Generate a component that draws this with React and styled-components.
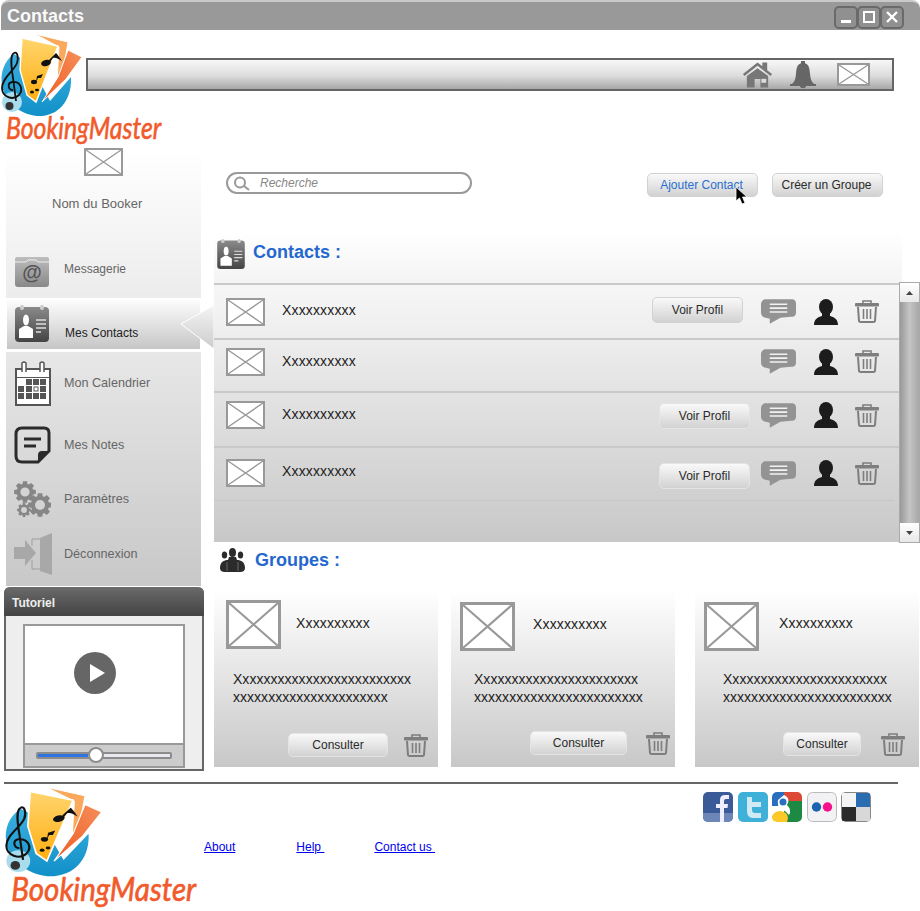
import React from "react";
import styled, { createGlobalStyle } from "styled-components";

const Global = createGlobalStyle`
  html, body { margin: 0; padding: 0; background: #fff; }
  body { font-family: "Liberation Sans", Arial, sans-serif; }
  * { box-sizing: border-box; }
`;

const Page = styled.div`
  position: relative;
  width: 920px;
  height: 911px;
  overflow: hidden;
  background: #fff;
`;
const TitleBar = styled.header`
  height: 30px;
  width: 919px;
  margin-left: 1px;
  border-radius: 8px 8px 0 0;
  background: #999;
  border-top: 2px solid #c9c9c9;
  display: flex;
  align-items: center;
  padding: 0 16px 0 6px;
`;
const WindowTitle = styled.h1`
  margin: 0;
  font-size: 18px;
  font-weight: bold;
  color: #fafafa;
  flex: 1;
`;
const WinButtons = styled.div`
  display: flex;
  margin-top: 2px;
`;
const WinButton = styled.div`
  width: 24px;
  height: 23px;
  margin-left: -1px;
  border: 2px solid #6a6a6a;
  border-radius: 5px;
  background: #909090;
  display: flex;
  align-items: center;
  justify-content: center;
`;
const TopRow = styled.div`
  height: 118px;
  display: flex;
  align-items: flex-start;
  padding-top: 3px;
`;
const LogoSvg = styled.svg`
  flex: none;
  display: block;
  width: ${p => p.$w}px;
  height: ${p => p.$h}px;
`;
const LogoSlot = styled.div`
  flex: none;
  width: 86px;
  overflow: visible;
`;
const NavBar = styled.nav`
  width: 808px;
  height: 33px;
  margin-top: 25px;
  border: 2px solid #666;
  background: linear-gradient(#f8f8f8, #dcdcdc 55%, #a8a8a8);
  display: flex;
  align-items: center;
  justify-content: flex-end;
  padding-right: 22px;
`;
const NavIcon = styled.svg`
  display: block;
  flex: none;
  margin-left: ${p => p.$ml || 0}px;
`;
const Body = styled.div`
  display: flex;
  padding-left: 4px;
`;
const Sidebar = styled.aside`
  width: 200px;
  flex: none;
  display: flex;
  flex-direction: column;
`;
const TopPanel = styled.section`
  width: 195px;
  height: 150px;
  margin-left: 2px;
  background: linear-gradient(#fff, #ececec);
  display: flex;
  flex-direction: column;
`;
const BookerName = styled.div`
  margin: 20px 0 0 46px;
  font-size: 13px;
  line-height: 16px;
  color: #666;
`;
const Ph = styled.svg`
  display: block;
  flex: none;
  background: #fff;
`;
const AvatarSlot = styled.div`
  margin-left: 78px;
`;
const MenuRow = styled.div`
  height: ${p => p.$h}px;
  margin-top: ${p => p.$mt || 0}px;
  display: flex;
  align-items: center;
`;
const IconSlot = styled.div`
  width: 58px;
  flex: none;
  padding-left: ${p => p.$pl ?? 9}px;
  display: flex;
`;
const MenuLabel = styled.span`
  font-size: ${p => p.$size || 12.6}px;
  color: ${p => p.$dark ? "#222" : "#666"};
  margin-top: ${p => p.$mt || 0}px;
`;
const ActiveItem = styled.div`
  width: 193px;
  height: 51px;
  margin-left: 3px;
  background: linear-gradient(#fff, #c6c6c6);
  display: flex;
  align-items: center;
`;
const ActiveArrow = styled.svg`
  position: absolute;
  left: 180px;
  top: 304px;
`;
const MenuPanel = styled.section`
  width: 195px;
  height: 234px;
  margin: 3px 0 1px 2px;
  background: linear-gradient(#e7e7e7, #c8c8c8);
`;
const Tutorial = styled.section`
  width: 200px;
  height: 184px;
  border: 2px solid #666;
  border-top: none;
  border-radius: 6px 6px 0 0;
  background: #eee;
`;
const TutorialHead = styled.div`
  height: 29px;
  margin: 0 -2px;
  padding: 2px 0 0 8px;
  border-radius: 6px 6px 0 0;
  background: linear-gradient(#6a6a6a, #444);
  color: #eee;
  font-size: 12px;
  font-weight: bold;
  line-height: 29px;
`;
const Video = styled.div`
  width: 162px;
  height: 144px;
  margin: 8px 0 0 17px;
  border: 2px solid #999;
  background: #fff;
  display: flex;
  flex-direction: column;
`;
const Screen = styled.div`
  flex: 1;
  display: flex;
  justify-content: center;
  padding: 26px 18px 0 0;
`;
const Controls = styled.div`
  height: 23px;
  border-top: 2px solid #999;
  background: #ccc;
  display: flex;
  align-items: center;
  padding: 0 11px;
`;
const Track = styled.div`
  position: relative;
  width: 136px;
  height: 7px;
  border: 2px solid #8c8c8c;
  border-radius: 2px;
  background: #e8e8ee;
`;
const TrackFill = styled.div`
  height: 100%;
  background: #2f73e0;
`;
const Knob = styled.div`
  position: absolute;
  left: 50px;
  top: -7px;
  width: 16px;
  height: 16px;
  border-radius: 50%;
  border: 2px solid #8c8c8c;
  background: #fff;
`;
const Main = styled.main`
  width: 706px;
  flex: none;
  margin-left: 10px;
`;
const SearchRow = styled.div`
  height: 84px;
  display: flex;
  align-items: flex-start;
  padding: 24px 0 0 12px;
`;
const SearchBox = styled.div`
  width: 246px;
  height: 22px;
  border: 2px solid #999;
  border-radius: 11px;
  background: #fff;
  display: flex;
  align-items: center;
  padding-left: 5px;
`;
const SearchText = styled.span`
  margin-left: 10px;
  font-size: 12px;
  font-style: italic;
  color: #888;
`;
const Btn = styled.button`
  flex: none;
  width: ${p => p.$w}px;
  height: ${p => p.$h || 24}px;
  margin: ${p => p.$m || 0};
  padding: 0 ${p => p.$tp || 0}px 0 0;
  border: 1px solid ${p => p.$flat ? "#e4e4e4" : "#d2d2d2"};
  border-radius: 5px;
  background: linear-gradient(#f9f9f9, #d2d2d2);
  font: 12px "Liberation Sans", Arial, sans-serif;
  color: ${p => p.$blue ? "#2a6fd0" : "#2a2a2a"};
`;
const Cursor = styled.svg`
  position: absolute;
  left: 735px;
  top: 186px;
`;
const SectionHead = styled.div`
  width: 688px;
  height: 51px;
  background: linear-gradient(#fff, #f4f4f4);
  display: flex;
  align-items: flex-start;
  padding: 7px 0 0 3px;
`;
const SectionTitle = styled.h2`
  margin: ${p => p.$mt || 0}px 0 0 ${p => p.$ml}px;
  font-size: 18px;
  font-weight: bold;
  color: #2468cf;
`;
const ListWrap = styled.div`
  display: flex;
  height: 260px;
`;
const ListBody = styled.div`
  width: 685px;
  height: 259px;
  background: linear-gradient(#f7f7f7, #c8c8c8);
`;
const Row = styled.div`
  height: ${p => p.$h}px;
  border-top: 2px solid #c9c9c9;
  padding: 0 20px ${p => p.$pb || 0}px 12px;
  display: flex;
  align-items: center;
`;
const RowEnd = styled.div`
  width: 680px;
  border-top: 1px solid #c6c6c6;
`;
const Name = styled.span`
  font-size: 14px;
  letter-spacing: .15px;
  color: #222;
  margin: 0 auto ${p => p.$mb ?? 3}px ${p => p.$ml}px;
`;
const Scrollbar = styled.div`
  width: 21px;
  height: 261px;
  margin-top: -1px;
  border: 1px solid #aaa;
  background: linear-gradient(90deg, #999, #c4c4c4 50%, #a8a8a8);
  display: flex;
  flex-direction: column;
  justify-content: space-between;
`;
const ScrollBtn = styled.div`
  height: 19px;
  background: linear-gradient(#fff, #e8e8e8);
  display: flex;
  align-items: center;
  justify-content: center;
`;
const GroupHead = styled.div`
  height: 47px;
  display: flex;
  align-items: center;
  padding: 0 0 13px 6px;
`;
const Cards = styled.div`
  display: flex;
`;
const Card = styled.article`
  flex: none;
  width: 224px;
  height: 177px;
  margin-left: ${p => p.$ml}px;
  background: linear-gradient(#fff, #c8c8c8);
  display: flex;
  flex-direction: column;
  padding: ${p => p.$top}px 0 0 ${p => p.$left}px;
`;
const CardHead = styled.div`
  display: flex;
  align-items: center;
  height: 49px;
`;
const CardText = styled.p`
  margin: ${p => p.$mt}px 0 0 ${p => p.$tl}px;
  font-size: 14px;
  line-height: 18px;
  letter-spacing: .03px;
  color: #222;
  white-space: pre-line;
`;
const CardFoot = styled.div`
  margin-top: auto;
  padding: 0 ${p => p.$pr}px ${p => p.$pb}px 0;
  display: flex;
  align-items: center;
  justify-content: flex-end;
`;
const FooterRule = styled.hr`
  width: 894px;
  height: 2px;
  margin: 11px 0 0 4px;
  border: none;
  background: #666;
`;
const Footer = styled.footer`
  display: flex;
  align-items: flex-start;
  padding: 2px 0 0 4px;
`;
const FootLinks = styled.div`
  display: flex;
  padding-top: 53px;
  margin-left: 7px;
`;
const FootLink = styled.a`
  font-size: 12px;
  line-height: 16px;
  color: #00e;
  text-decoration: underline;
  white-space: pre;
  margin-left: ${p => p.$ml || 0}px;
`;
const Socials = styled.div`
  display: flex;
  gap: 4.5px;
  margin: 6px 0 0 268px;
`;
const Social = styled.svg`
  display: block;
  border-radius: 5px;
`;

const Logo = ({ w, h, id }) => (
  <LogoSvg $w={w} $h={h} viewBox="0 0 162 114" preserveAspectRatio="none">
    <defs>
      <linearGradient id={id + "y"} x1="0" y1="0" x2="0" y2="1">
        <stop offset="0" stopColor="#ffd56e" /><stop offset="1" stopColor="#ffae10" />
      </linearGradient>
      <linearGradient id={id + "b"} x1="0" y1="0" x2="0" y2="1">
        <stop offset="0" stopColor="#3db0e0" /><stop offset="1" stopColor="#1190c8" />
      </linearGradient>
      <linearGradient id={id + "r"} x1="1" y1="0" x2="0" y2="1">
        <stop offset="0" stopColor="#f58f5a" /><stop offset="1" stopColor="#f05a22" />
      </linearGradient>
    </defs>
    <path d="M14 21 C4 28 0 40 2 52 C5 72 25 84 42 83 C62 81 72 64 71 44 L50 68 L30 30 Z" fill={`url(#${id}b)`} />
    <circle cx="12" cy="69" r="10" fill="#a9dcec" />
    <circle cx="9.500" cy="73" r="4" fill="#333" />
    <path d="M35 1 L68 9 L65 27 L57 50 L59 14 Z" fill="#f9a85c" stroke="#fff" strokeWidth="1" />
    <path d="M68 17 L82 24 L66 46 L42 69 L58 44 Z" fill={`url(#${id}r)`} stroke="#fff" strokeWidth="1" />
    <path d="M22 5 L58 13 L36 69 L27 62 L20 37 Z" fill={`url(#${id}y)`} stroke="#fff" strokeWidth="1.400" />
    <g fill="#111">
      <ellipse cx="46" cy="30" rx="5" ry="3" transform="rotate(-15 46 30)" />
      <path d="M50 29 L53 25 C56 24 58 26 62 28 C59 24 58 22 56 20 L49 27 Z" />
      <ellipse cx="34" cy="49" rx="3" ry="2.200" />
      <path d="M36 49 L37 43 L43 41 L41 45 L38 45 Z" />
      <ellipse cx="32" cy="59" rx="2" ry="1.500" />
      <ellipse cx="37" cy="57" rx="2" ry="1.300" />
    </g>
    <path d="M13 57 C8 57 7 50 12 49 C20 48 24 56 19 62 C13 68 2 64 2 55 C2 45 14 38 17 30 C19 24 17 18 14 20 C10 22 11 32 13 45 L16 68" fill="none" stroke="#111" strokeWidth="1.800" />
    <text transform="translate(6 106) scale(.8 1)" fontFamily="Lato, 'Liberation Sans', sans-serif" fontStyle="italic" fontSize="31" fill="#f15a2a" stroke="#f15a2a" strokeWidth=".6">BookingMaster</text>
  </LogoSvg>
);

const Placeholder = ({ w, h, sw = 2 }) => (
  <Ph width={w} height={h} viewBox={`0 0 ${w} ${h}`}>
    <rect x={sw / 2} y={sw / 2} width={w - sw} height={h - sw} fill="#fff" stroke="#999" strokeWidth={sw} />
    <path d={`M${sw} ${sw} L${w - sw} ${h - sw} M${w - sw} ${sw} L${sw} ${h - sw}`} stroke="#999" strokeWidth={sw * .7} fill="none" />
  </Ph>
);

const Home = () => (
  <NavIcon width="31" height="28" viewBox="0 0 32 28">
    <path d="M1 13 L16 1 L21 5 L21 1 L26 1 L26 9 L31 13 L29.500 15 L16 4.500 L2.500 15 Z" fill="#777" />
    <path d="M5 15 L16 7 L27 15 L27 27 L19 27 L19 18 L13 18 L13 27 L5 27 Z" fill="#777" />
    <rect x="20" y="18" width="5" height="4" fill="#ddd" />
  </NavIcon>
);
const Bell = () => (
  <NavIcon $ml={17} width="26" height="28" viewBox="0 0 26 28">
    <rect x="11" y="0" width="4" height="3" fill="#666" />
    <path d="M13 2 C7 2 6.500 7 6 13 C5.500 18 4.500 21 2 23 L24 23 C21.500 21 20.500 18 20 13 C19.500 7 19 2 13 2 Z" fill="#666" />
    <rect x="0" y="23" width="26" height="2" fill="#666" />
    <path d="M10 25 L16 25 C16 28 10 28 10 25 Z" fill="#666" />
  </NavIcon>
);
const Chat = ({ gap = 0 }) => (
  <NavIcon $ml={gap} width="35" height="25" viewBox="0 0 36 25">
    <path d="M5 0 L31 0 C35 0 36 2 36 5 L36 13 C36 17 34 18 31 18 L20 19 L9 25 L9 20 L5 19 C1 18 0 16 0 13 L0 5 C0 2 2 0 5 0 Z" fill="#939393" />
    <path d="M9 5 H27 M9 9 H27 M9 13 H27" stroke="#f2f2f2" strokeWidth="1.600" />
  </NavIcon>
);
const Person = () => (
  <NavIcon $ml={18} width="24" height="26" viewBox="0 0 24 26">
    <ellipse cx="12" cy="8" rx="7" ry="8" fill="#1c1c1c" />
    <path d="M8 14 L16 14 L16 17 C20 18 24 20 24 26 L0 26 C0 20 4 18 8 17 Z" fill="#1c1c1c" />
  </NavIcon>
);
const Trash = ({ ml = 17 }) => (
  <NavIcon $ml={ml} width="24" height="23" viewBox="0 0 24 23">
    <path d="M8 3 V1 H16 V3" fill="none" stroke="#7e7e7e" strokeWidth="1.600" />
    <rect x="0" y="3" width="24" height="3.400" rx="1" fill="#7e7e7e" />
    <path d="M3 7 L4 21 Q4.200 22 5.500 22 L18.500 22 Q19.800 22 20 21 L21 7" fill="none" stroke="#7e7e7e" strokeWidth="2" />
    <path d="M8.500 9 V19 M12 9 V19 M15.500 9 V19" stroke="#7e7e7e" strokeWidth="1.600" />
  </NavIcon>
);
const MailIcon = () => (
  <NavIcon width="34" height="30" viewBox="0 0 34 30">
    <defs><linearGradient id="mi" x1="0" y1="0" x2="0" y2="1"><stop offset="0" stopColor="#bdbdbd" /><stop offset="1" stopColor="#888" /></linearGradient></defs>
    <path d="M2 0 L32 0 Q34 0 34 2 L34 27 Q34 30 31 30 L3 30 Q0 30 0 27 L0 2 Q0 0 2 0 Z" fill="url(#mi)" />
    <path d="M0 5 H11 L13 3 H21 L23 5 H34" fill="none" stroke="#eee" strokeWidth="1" />
    <text x="17" y="22" textAnchor="middle" fontFamily="'Liberation Sans', sans-serif" fontSize="20" fontWeight="bold" fill="#555">@</text>
  </NavIcon>
);
const ContactCard = ({ id, w = 34, h = 37 }) => (
  <NavIcon width={w} height={h} viewBox="0 0 34 37">
    <defs><linearGradient id={id} x1="0" y1="0" x2="0" y2="1"><stop offset="0" stopColor="#8a8a8a" /><stop offset="1" stopColor="#444" /></linearGradient></defs>
    <rect x="0" y="2" width="34" height="35" rx="4" fill={`url(#${id})`} />
    <rect x="5" y="0" width="4" height="5" rx="2" fill="#ccc" />
    <rect x="25" y="0" width="4" height="5" rx="2" fill="#ccc" />
    <ellipse cx="11" cy="15" rx="3" ry="5.500" fill="#fff" />
    <path d="M9 21 H13 L18 24 V33 H4 V24 Z" fill="#fff" />
    <path d="M21 15 H31 M21 19 H31 M21 23 H31 M21 27 H26" stroke="#ddd" strokeWidth="1.300" />
  </NavIcon>
);
const Calendar = () => (
  <NavIcon width="36" height="45" viewBox="0 0 36 45">
    <rect x="0" y="7" width="36" height="38" fill="#555" />
    <rect x="2" y="9" width="32" height="7" fill="#fff" />
    <path d="M7 11 V2 Q9 0 11 2 V11 M25 11 V2 Q27 0 29 2 V11" fill="#fff" stroke="#555" strokeWidth="1.500" />
    <rect x="2" y="17" width="32" height="26" fill="#fff" />
    <g fill="#555">
      {[[11, 18], [18, 18], [25, 18], [3, 25], [11, 25], [25, 25], [3, 32], [11, 32], [18, 32], [25, 32]].map(([x, y]) => (
        <rect key={x + "-" + y} x={x} y={y} width="6" height="6" />
      ))}
    </g>
    <rect x="19" y="26" width="4" height="4" fill="none" stroke="#555" strokeWidth="1" />
  </NavIcon>
);
const Note = () => (
  <NavIcon width="37" height="38" viewBox="0 0 37 38">
    <path d="M8 2 H30 Q35 2 35 7 V25 L24 36 H8 Q2 36 2 30 V8 Q2 2 8 2 Z" fill="none" stroke="#2b2b2b" strokeWidth="3" />
    <path d="M24 36 V29 Q24 25 28 25 H35 Z" fill="#2b2b2b" />
    <path d="M10 13 H27 M10 20 H22" stroke="#2b2b2b" strokeWidth="3" />
  </NavIcon>
);
const gearPath = (cx, cy, r, teeth) => {
  const pts = [];
  const step = (Math.PI * 2) / teeth;
  for (let i = 0; i < teeth; i++) {
    const a = i * step;
    [[-.32, .76], [-.2, 1], [.2, 1], [.32, .76]].forEach(([o, k]) => {
      const t = a + o * step * 1.2;
      pts.push(`${(cx + Math.cos(t) * r * k).toFixed(2)} ${(cy + Math.sin(t) * r * k).toFixed(2)}`);
    });
  }
  const hole = r * .42;
  return `M${pts.join(" L")} Z M${cx - hole} ${cy} a${hole} ${hole} 0 1 0 ${hole * 2} 0 a${hole} ${hole} 0 1 0 ${-hole * 2} 0 Z`;
};
const Gears = () => (
  <NavIcon width="37" height="37" viewBox="0 0 37 37">
    <path d={gearPath(11, 11, 11, 8)} fill="#868686" fillRule="evenodd" />
    <path d={gearPath(26, 24, 12, 8)} fill="#868686" fillRule="evenodd" />
    <path d={gearPath(10, 29, 7, 8)} fill="#868686" fillRule="evenodd" />
  </NavIcon>
);
const Logout = () => (
  <NavIcon width="38" height="42" viewBox="0 0 38 42">
    <path d="M0 14 H11 V7 L22 20 L11 33 V26 H0 Z" fill="#a8a8a8" />
    <path d="M26 5 L38 0 V42 L26 38 Z" fill="#a8a8a8" />
    <path d="M26 6 H18 V13 M18 27 V36 H26" fill="none" stroke="#999" strokeWidth=".9" />
  </NavIcon>
);
const Groups = () => (
  <NavIcon width="25" height="24" viewBox="0 0 25 24">
    <g fill="#2b2b2b">
      <ellipse cx="12.500" cy="4.500" rx="3.500" ry="4.500" />
      <ellipse cx="4.500" cy="7" rx="2.700" ry="3.500" />
      <ellipse cx="20.500" cy="7" rx="2.700" ry="3.500" />
      <path d="M9 9 H16 L17 12 C21 12 25 14 25 20 Q25 24 20 24 H5 Q0 24 0 20 C0 14 4 12 8 12 Z" />
    </g>
    <path d="M7 14 V23 M18 14 V23" stroke="#777" strokeWidth=".8" />
  </NavIcon>
);

const contacts = [
  { h: 55, btn: { w: 91, m: "-4px 0 0" }, gap: 18 },
  { h: 53, pb: 8, gap: 0, mb: 1 },
  { h: 55, pb: 9, btn: { w: 91, m: "1px 0 0" }, gap: 11 },
  { h: 54, pb: 2, btn: { w: 91, m: "5px 0 0" }, gap: 11, mb: 5 },
];

const groups = [
  { ml: 0, top: 10, left: 12, nameMl: 15, nameMb: 4, mt: 21, tl: 7, pr: 10, pb: 10, btn: 100, gap: 16, lines: "Xxxxxxxxxxxxxxxxxxxxxxxxx\nxxxxxxxxxxxxxxxxxxxxxx" },
  { ml: 13, top: 12, left: 9, nameMl: 18, nameMb: 6, mt: 19, tl: 14, pr: 5, pb: 12, btn: 97, gap: 19, lines: "Xxxxxxxxxxxxxxxxxxxxxxx\nxxxxxxxxxxxxxxxxxxxxxxxx" },
  { ml: 20, top: 12, left: 9, nameMl: 20, nameMb: 8, mt: 19, tl: 19, pr: 14, pb: 11, btn: 78, gap: 20, lines: "Xxxxxxxxxxxxxxxxxxxxxxx\nxxxxxxxxxxxxxxxxxxxxxxxx" },
];

export default function App() {
  return (
    <Page>
      <Global />
      <TitleBar>
        <WindowTitle>Contacts</WindowTitle>
        <WinButtons>
          <WinButton>
            <svg width="14" height="14" viewBox="0 0 14 14"><rect x="2" y="10" width="10" height="3" fill="#fff" /></svg>
          </WinButton>
          <WinButton>
            <svg width="14" height="14" viewBox="0 0 14 14"><rect x="2" y="2" width="10" height="10" fill="none" stroke="#fff" strokeWidth="2" /></svg>
          </WinButton>
          <WinButton>
            <svg width="14" height="14" viewBox="0 0 14 14"><path d="M2 2 L12 12 M12 2 L2 12" stroke="#fff" strokeWidth="2.400" /></svg>
          </WinButton>
        </WinButtons>
      </TitleBar>
      <TopRow>
        <LogoSlot><Logo w={162} h={114} id="a" /></LogoSlot>
        <NavBar>
          <Home />
          <Bell />
          <NavIcon as="div" $ml={21}><Placeholder w={33} h={23} /></NavIcon>
        </NavBar>
      </TopRow>
      <Body>
        <Sidebar>
          <TopPanel>
            <AvatarSlot><Placeholder w={39} h={28} /></AvatarSlot>
            <BookerName>Nom du Booker</BookerName>
            <MenuRow $h={40} $mt={40}>
              <IconSlot><MailIcon /></IconSlot>
              <MenuLabel $size={12} $mt={-6}>Messagerie</MenuLabel>
            </MenuRow>
          </TopPanel>
          <ActiveItem>
            <IconSlot $pl={8}><ContactCard id="c1" /></IconSlot>
            <MenuLabel $size={12} $dark $mt={19}>Mes Contacts</MenuLabel>
          </ActiveItem>
          <MenuPanel>
            <MenuRow $h={62}><IconSlot><Calendar /></IconSlot><MenuLabel>Mon Calendrier</MenuLabel></MenuRow>
            <MenuRow $h={62}><IconSlot $pl={8}><Note /></IconSlot><MenuLabel>Mes Notes</MenuLabel></MenuRow>
            <MenuRow $h={46}><IconSlot $pl={8}><Gears /></IconSlot><MenuLabel>Paramètres</MenuLabel></MenuRow>
            <MenuRow $h={64}><IconSlot $pl={8}><Logout /></IconSlot><MenuLabel>Déconnexion</MenuLabel></MenuRow>
          </MenuPanel>
          <Tutorial>
            <TutorialHead>Tutoriel</TutorialHead>
            <Video>
              <Screen>
                <svg width="42" height="42" viewBox="0 0 42 42">
                  <circle cx="21" cy="21" r="21" fill="#666" />
                  <path d="M16 12 L31 21 L16 30 Z" fill="#fff" />
                </svg>
              </Screen>
              <Controls>
                <Track>
                  <TrackFill style={{ width: "38%" }} />
                  <Knob />
                </Track>
              </Controls>
            </Video>
          </Tutorial>
        </Sidebar>
        <Main>
          <SearchRow>
            <SearchBox>
              <svg width="17" height="15" viewBox="0 0 17 15">
                <circle cx="7" cy="6.500" r="5" fill="none" stroke="#999" strokeWidth="2" />
                <path d="M11 10 L16 14" stroke="#999" strokeWidth="2" />
              </svg>
              <SearchText>Recherche</SearchText>
            </SearchBox>
            <Btn $w={111} $blue $tp={2} $m="1px 0 0 175px">Ajouter Contact</Btn>
            <Btn $w={111} $tp={2} $m="1px 0 0 14px">Créer un Groupe</Btn>
          </SearchRow>
          <SectionHead>
            <ContactCard id="c2" w={28} h={30} />
            <SectionTitle $ml={8} $mt={3}>Contacts :</SectionTitle>
          </SectionHead>
          <ListWrap>
            <ListBody>
              {contacts.map((c, i) => (
                <Row key={i} $h={c.h} $pb={c.pb}>
                  <Placeholder w={39} h={28} />
                  <Name $ml={17} $mb={c.mb}>Xxxxxxxxxx</Name>
                  {c.btn && <Btn $w={c.btn.w} $h={26} $m={c.btn.m} $flat={i > 0}>Voir Profil</Btn>}
                  <Chat gap={c.gap} />
                  <Person />
                  <Trash />
                </Row>
              ))}
              <RowEnd />
            </ListBody>
            <Scrollbar>
              <ScrollBtn><svg width="7" height="4" viewBox="0 0 7 4"><path d="M3.500 0 L7 4 H0 Z" fill="#444" /></svg></ScrollBtn>
              <ScrollBtn><svg width="7" height="4" viewBox="0 0 7 4"><path d="M0 0 H7 L3.500 4 Z" fill="#444" /></svg></ScrollBtn>
            </Scrollbar>
          </ListWrap>
          <GroupHead>
            <Groups />
            <SectionTitle $ml={10}>Groupes :</SectionTitle>
          </GroupHead>
          <Cards>
            {groups.map((g, i) => (
              <Card key={i} $ml={g.ml} $top={g.top} $left={g.left}>
                <CardHead>
                  <Placeholder w={55} h={49} sw={3} />
                  <Name $ml={g.nameMl} $mb={g.nameMb}>Xxxxxxxxxx</Name>
                </CardHead>
                <CardText $mt={g.mt} $tl={g.tl}>{g.lines}</CardText>
                <CardFoot $pr={g.pr} $pb={g.pb}>
                  <Btn $w={g.btn} $flat>Consulter</Btn>
                  <Trash ml={g.gap} />
                </CardFoot>
              </Card>
            ))}
          </Cards>
        </Main>
      </Body>
      <FooterRule />
      <Footer>
        <Logo w={193} h={124} id="f" />
        <FootLinks>
          <FootLink href="#">About</FootLink>
          <FootLink href="#" $ml={61}>Help </FootLink>
          <FootLink href="#" $ml={50}>Contact us </FootLink>
        </FootLinks>
        <Socials>
          <Social width="30" height="30" viewBox="0 0 30 30">
            <rect width="30" height="30" fill="#3a5a98" />
            <rect y="21" width="30" height="9" fill="#6c86b8" />
            <path d="M17 30 V16 H13 V12 H17 V8 Q17 3 22 3 H26 V7 H23 Q21 7 21 9 V12 H25 L24.500 16 H21 V30 Z" fill="#eef" />
          </Social>
          <Social width="30" height="30" viewBox="0 0 30 30">
            <rect width="30" height="30" fill="#3fb0d8" />
            <path d="M9 5 H14 V10 H23 V15 H14 V18 Q14 21 17 21 H23 V26 H15 Q9 26 9 19 Z" fill="#cfeaf4" />
          </Social>
          <Social width="30" height="30" viewBox="0 0 30 30">
            <rect width="30" height="30" fill="#fff" />
            <rect x="12" width="18" height="9" fill="#dc4a36" />
            <rect x="0" width="12" height="14" fill="#2a6fbf" />
            <rect x="12" y="9" width="18" height="21" fill="#1d8a44" />
            <path d="M0 30 V24 Q3 19 8 19 Q16 20 16 26 L15 30 Z" fill="#fcc828" />
            <path d="M12 3 Q19 6 15 13 Q20 18 17 23 L13 19 L8 18 Q5 12 6 8 Z" fill="#fff" />
            <circle cx="11" cy="10" r="3.500" fill="#2a6fbf" />
          </Social>
          <Social width="30" height="30" viewBox="0 0 30 30">
            <rect x=".5" y=".5" width="29" height="29" rx="5" fill="#f2f2f4" stroke="#bbb" />
            <circle cx="9.500" cy="15" r="4.700" fill="#1e63b0" />
            <circle cx="20.500" cy="15" r="4.700" fill="#f5128c" />
          </Social>
          <Social width="30" height="30" viewBox="0 0 30 30">
            <rect width="30" height="30" fill="#888" />
            <rect x="1" y="1" width="14" height="14" fill="#f4f4f4" />
            <rect x="15" y="1" width="14" height="14" fill="#2a6db0" />
            <rect x="1" y="15" width="14" height="14" fill="#2a2a2a" />
            <rect x="15" y="15" width="14" height="14" fill="#d8d8d8" />
          </Social>
        </Socials>
      </Footer>
      <ActiveArrow width="34" height="46" viewBox="0 0 34 46">
        <defs><linearGradient id="arr" x1="0" y1="0" x2="0" y2="1"><stop offset="0" stopColor="#f4f4f4" /><stop offset="1" stopColor="#cccccc" /></linearGradient></defs>
        <path d="M34 1 L1 20 L34 45 Z" fill="url(#arr)" stroke="#fff" strokeWidth="1" />
      </ActiveArrow>
      <Cursor width="16" height="20" viewBox="0 0 16 20">
        <path d="M1 1 L1 15 L4.500 12 L7 18 L10 17 L7.500 11 L12 11 Z" fill="#000" stroke="#fff" strokeWidth=".8" />
      </Cursor>
    </Page>
  );
}
